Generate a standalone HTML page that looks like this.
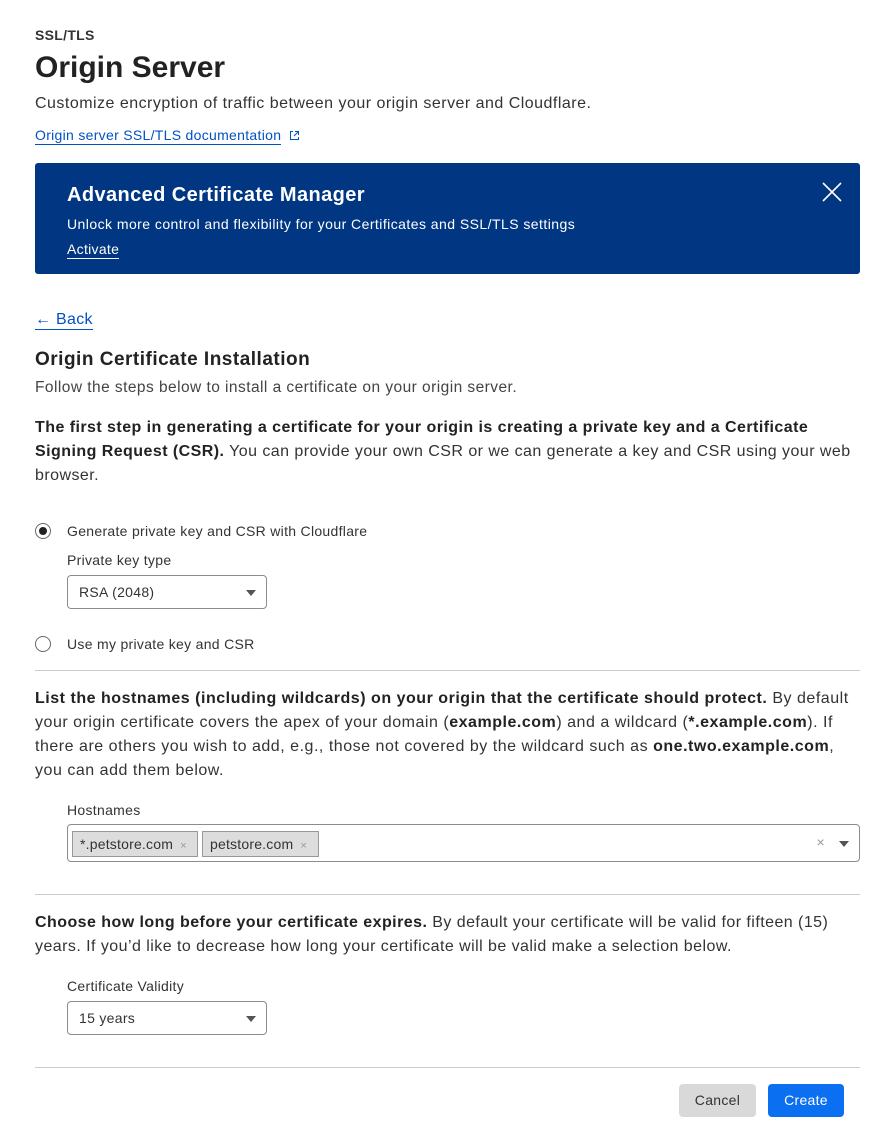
<!DOCTYPE html>
<html><head><meta charset="utf-8"><style>
*{margin:0;padding:0;box-sizing:border-box}
body{width:886px;height:1143px;background:#fff;font-family:"Liberation Sans",sans-serif;color:#333;position:relative;overflow:hidden;letter-spacing:0.3px}
.a{position:absolute;white-space:nowrap}
.p{font-size:16px;line-height:24px;position:absolute;left:35px;width:825px;letter-spacing:0.45px}
b{font-weight:bold;color:#222}
.sel{position:absolute;border:1px solid #8c8c8c;border-radius:4px;font-size:14px;padding-left:11px;line-height:32px;height:34px}
.tri{position:absolute;right:10px;top:14px;width:0;height:0;border-left:5px solid transparent;border-right:5px solid transparent;border-top:6px solid #555}
.hr{position:absolute;left:35px;width:825px;height:1px;background:#ccc}
.radio{position:absolute;width:16px;height:16px;border:1px solid #666;border-radius:50%}
.tag{position:absolute;top:6px;height:26px;background:#ddd;border:1px solid #999;font-size:14px;line-height:24px;padding-left:7px;letter-spacing:0.2px}
.tag i{font-style:normal;color:#999;font-size:11px;margin-left:7px}
</style></head><body>
<div class="a" style="left:35px;top:27px;font-size:14px;font-weight:bold">SSL/TLS</div>
<div class="a" style="left:35px;top:51px;font-size:30px;font-weight:bold;color:#222;letter-spacing:0">Origin Server</div>
<div class="a" style="left:35px;top:95px;font-size:16px;letter-spacing:0.48px">Customize encryption of traffic between your origin server and Cloudflare.</div>
<div class="a" style="left:35px;top:127px;font-size:14px;color:#0051c3;border-bottom:1px solid #0051c3;line-height:17px">Origin server SSL/TLS documentation</div>
<svg class="a" style="left:289px;top:130px" width="11" height="11" viewBox="0 0 11 11" fill="none" stroke="#0051c3" stroke-width="1"><path d="M4 1.5H1.5v8h8V7M6 1.5h3.5V5M9.5 1.5L5 6"/></svg>
<div class="a" style="left:35px;top:163px;width:825px;height:111px;background:#003682;border-radius:3px"></div>
<div class="a" style="left:67px;top:184px;font-size:20px;font-weight:bold;color:#fff;letter-spacing:0.4px">Advanced Certificate Manager</div>
<div class="a" style="left:67px;top:216px;font-size:14px;color:#fff;letter-spacing:0.45px">Unlock more control and flexibility for your Certificates and SSL/TLS settings</div>
<div class="a" style="left:67px;top:241px;font-size:14px;color:#fff;border-bottom:1px solid #fff;line-height:17px">Activate</div>
<svg class="a" style="left:822px;top:182px" width="20" height="20" viewBox="0 0 20 20" stroke="#fff" stroke-width="1.6"><path d="M1 1L19 19M19 1L1 19"/></svg>
<div class="a" style="left:35px;top:310px;font-size:16px;color:#0051c3;line-height:19px;border-bottom:1px solid #0051c3">← Back</div>
<div class="a" style="left:35px;top:349px;font-size:19px;font-weight:bold;color:#222;letter-spacing:0.5px">Origin Certificate Installation</div>
<div class="a" style="left:35px;top:379px;font-size:15.5px;color:#444;letter-spacing:0.45px">Follow the steps below to install a certificate on your origin server.</div>
<div class="p" style="top:416px"><b>The first step in generating a certificate for your origin is creating a private key and a Certificate Signing Request (CSR).</b> You can provide your own CSR or we can generate a key and CSR using your web browser.</div>
<div class="radio" style="left:35px;top:523px"><div style="position:absolute;left:3px;top:3px;width:8px;height:8px;border-radius:50%;background:#222"></div></div>
<div class="a" style="left:67px;top:523px;font-size:14px">Generate private key and CSR with Cloudflare</div>
<div class="a" style="left:67px;top:552px;font-size:14px">Private key type</div>
<div class="sel" style="left:67px;top:575px;width:200px">RSA (2048)<div class="tri"></div></div>
<div class="radio" style="left:35px;top:636px"></div>
<div class="a" style="left:67px;top:636px;font-size:14px">Use my private key and CSR</div>
<div class="hr" style="top:670px"></div>
<div class="p" style="top:687px;letter-spacing:0.52px"><b>List the hostnames (including wildcards) on your origin that the certificate should protect.</b> By default your origin certificate covers the apex of your domain (<b>example.com</b>) and a wildcard (<b>*.example.com</b>). If there are others you wish to add, e.g., those not covered by the wildcard such as <b>one.two.example.com</b>, you can add them below.</div>
<div class="a" style="left:67px;top:802px;font-size:14px">Hostnames</div>
<div class="a" style="left:67px;top:824px;width:793px;height:38px;border:1px solid #8c8c8c;border-radius:4px">
<div class="tag" style="left:4px;width:126px">*.petstore.com<i>×</i></div>
<div class="tag" style="left:134px;width:117px">petstore.com<i>×</i></div>
<div class="a" style="right:34px;top:9px;color:#999;font-size:14px">×</div>
<div class="tri" style="top:16px"></div>
</div>
<div class="hr" style="top:894px"></div>
<div class="p" style="top:911px"><b>Choose how long before your certificate expires.</b> By default your certificate will be valid for fifteen (15) years. If you’d like to decrease how long your certificate will be valid make a selection below.</div>
<div class="a" style="left:67px;top:978px;font-size:14px">Certificate Validity</div>
<div class="sel" style="left:67px;top:1001px;width:200px">15 years<div class="tri"></div></div>
<div class="hr" style="top:1067px"></div>
<div class="a" style="left:679px;top:1084px;width:77px;height:33px;background:#d9d9d9;border-radius:4px;font-size:14px;line-height:33px;text-align:center">Cancel</div>
<div class="a" style="left:768px;top:1084px;width:76px;height:33px;background:#0a6ff0;border-radius:4px;font-size:14px;line-height:33px;text-align:center;color:#fff">Create</div>
</body></html>
